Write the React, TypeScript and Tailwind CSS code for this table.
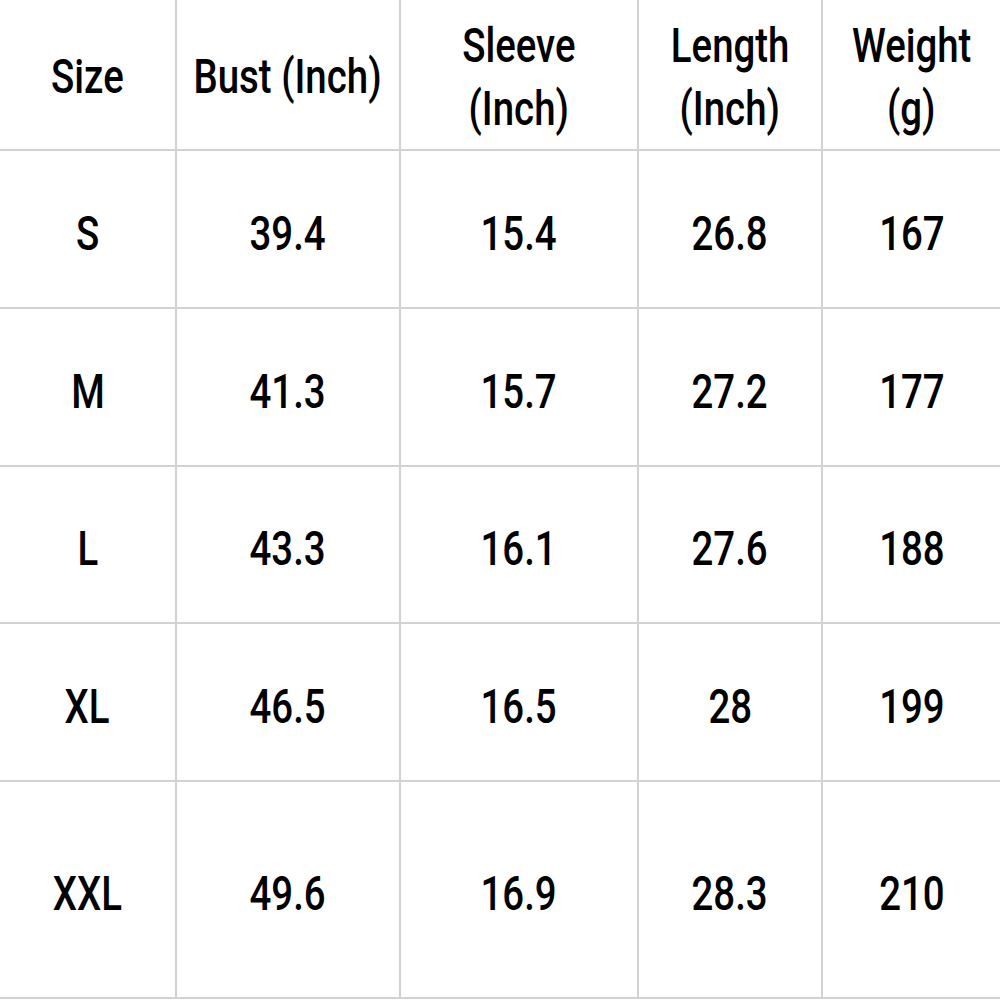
import React from "react";

const cols = ["w-[177px]", "w-[224px]", "w-[238px]", "w-[184px]", "w-[177px]"];
const rowH = ["h-[158px]", "h-[158px]", "h-[157px]", "h-[158px]", "h-[217px]"];

const header: string[][] = [
  ["Size"],
  ["Bust (Inch)"],
  ["Sleeve", "(Inch)"],
  ["Length", "(Inch)"],
  ["Weight", "(g)"],
];

const rows: string[][] = [
  ["S", "39.4", "15.4", "26.8", "167"],
  ["M", "41.3", "15.7", "27.2", "177"],
  ["L", "43.3", "16.1", "27.6", "188"],
  ["XL", "46.5", "16.5", "28", "199"],
  ["XXL", "49.6", "16.9", "28.3", "210"],
];

function Txt({ children }: { children: React.ReactNode }) {
  return (
    <span className="inline-block scale-x-[0.8] whitespace-nowrap">{children}</span>
  );
}

export default function App() {
  return (
    <div
      className="w-[1000px] h-[1000px] bg-white text-black text-[48px] font-medium overflow-hidden"
      style={{ fontFamily: "Roboto, 'Liberation Sans', sans-serif" }}
    >
      <div className="flex h-[151px]">
        {header.map((h, i) => (
          <div
            key={i}
            className={`${cols[i]} shrink-0 flex flex-col items-center justify-center pt-[4px] leading-[63px] border-b-2 border-[#d2d2d2] ${
              i < 4 ? "border-r-2" : ""
            }`}
          >
            {h.map((line, j) => (
              <Txt key={j}>{line}</Txt>
            ))}
          </div>
        ))}
      </div>
      {rows.map((r, ri) => (
        <div key={ri} className={`flex ${rowH[ri]}`}>
          {r.map((c, ci) => (
            <div
              key={ci}
              className={`${cols[ci]} shrink-0 flex items-center justify-center pt-[9px] leading-none border-b-2 border-[#d2d2d2] ${
                ci < 4 ? "border-r-2" : ""
              }`}
            >
              <Txt>{c}</Txt>
            </div>
          ))}
        </div>
      ))}
    </div>
  );
}
